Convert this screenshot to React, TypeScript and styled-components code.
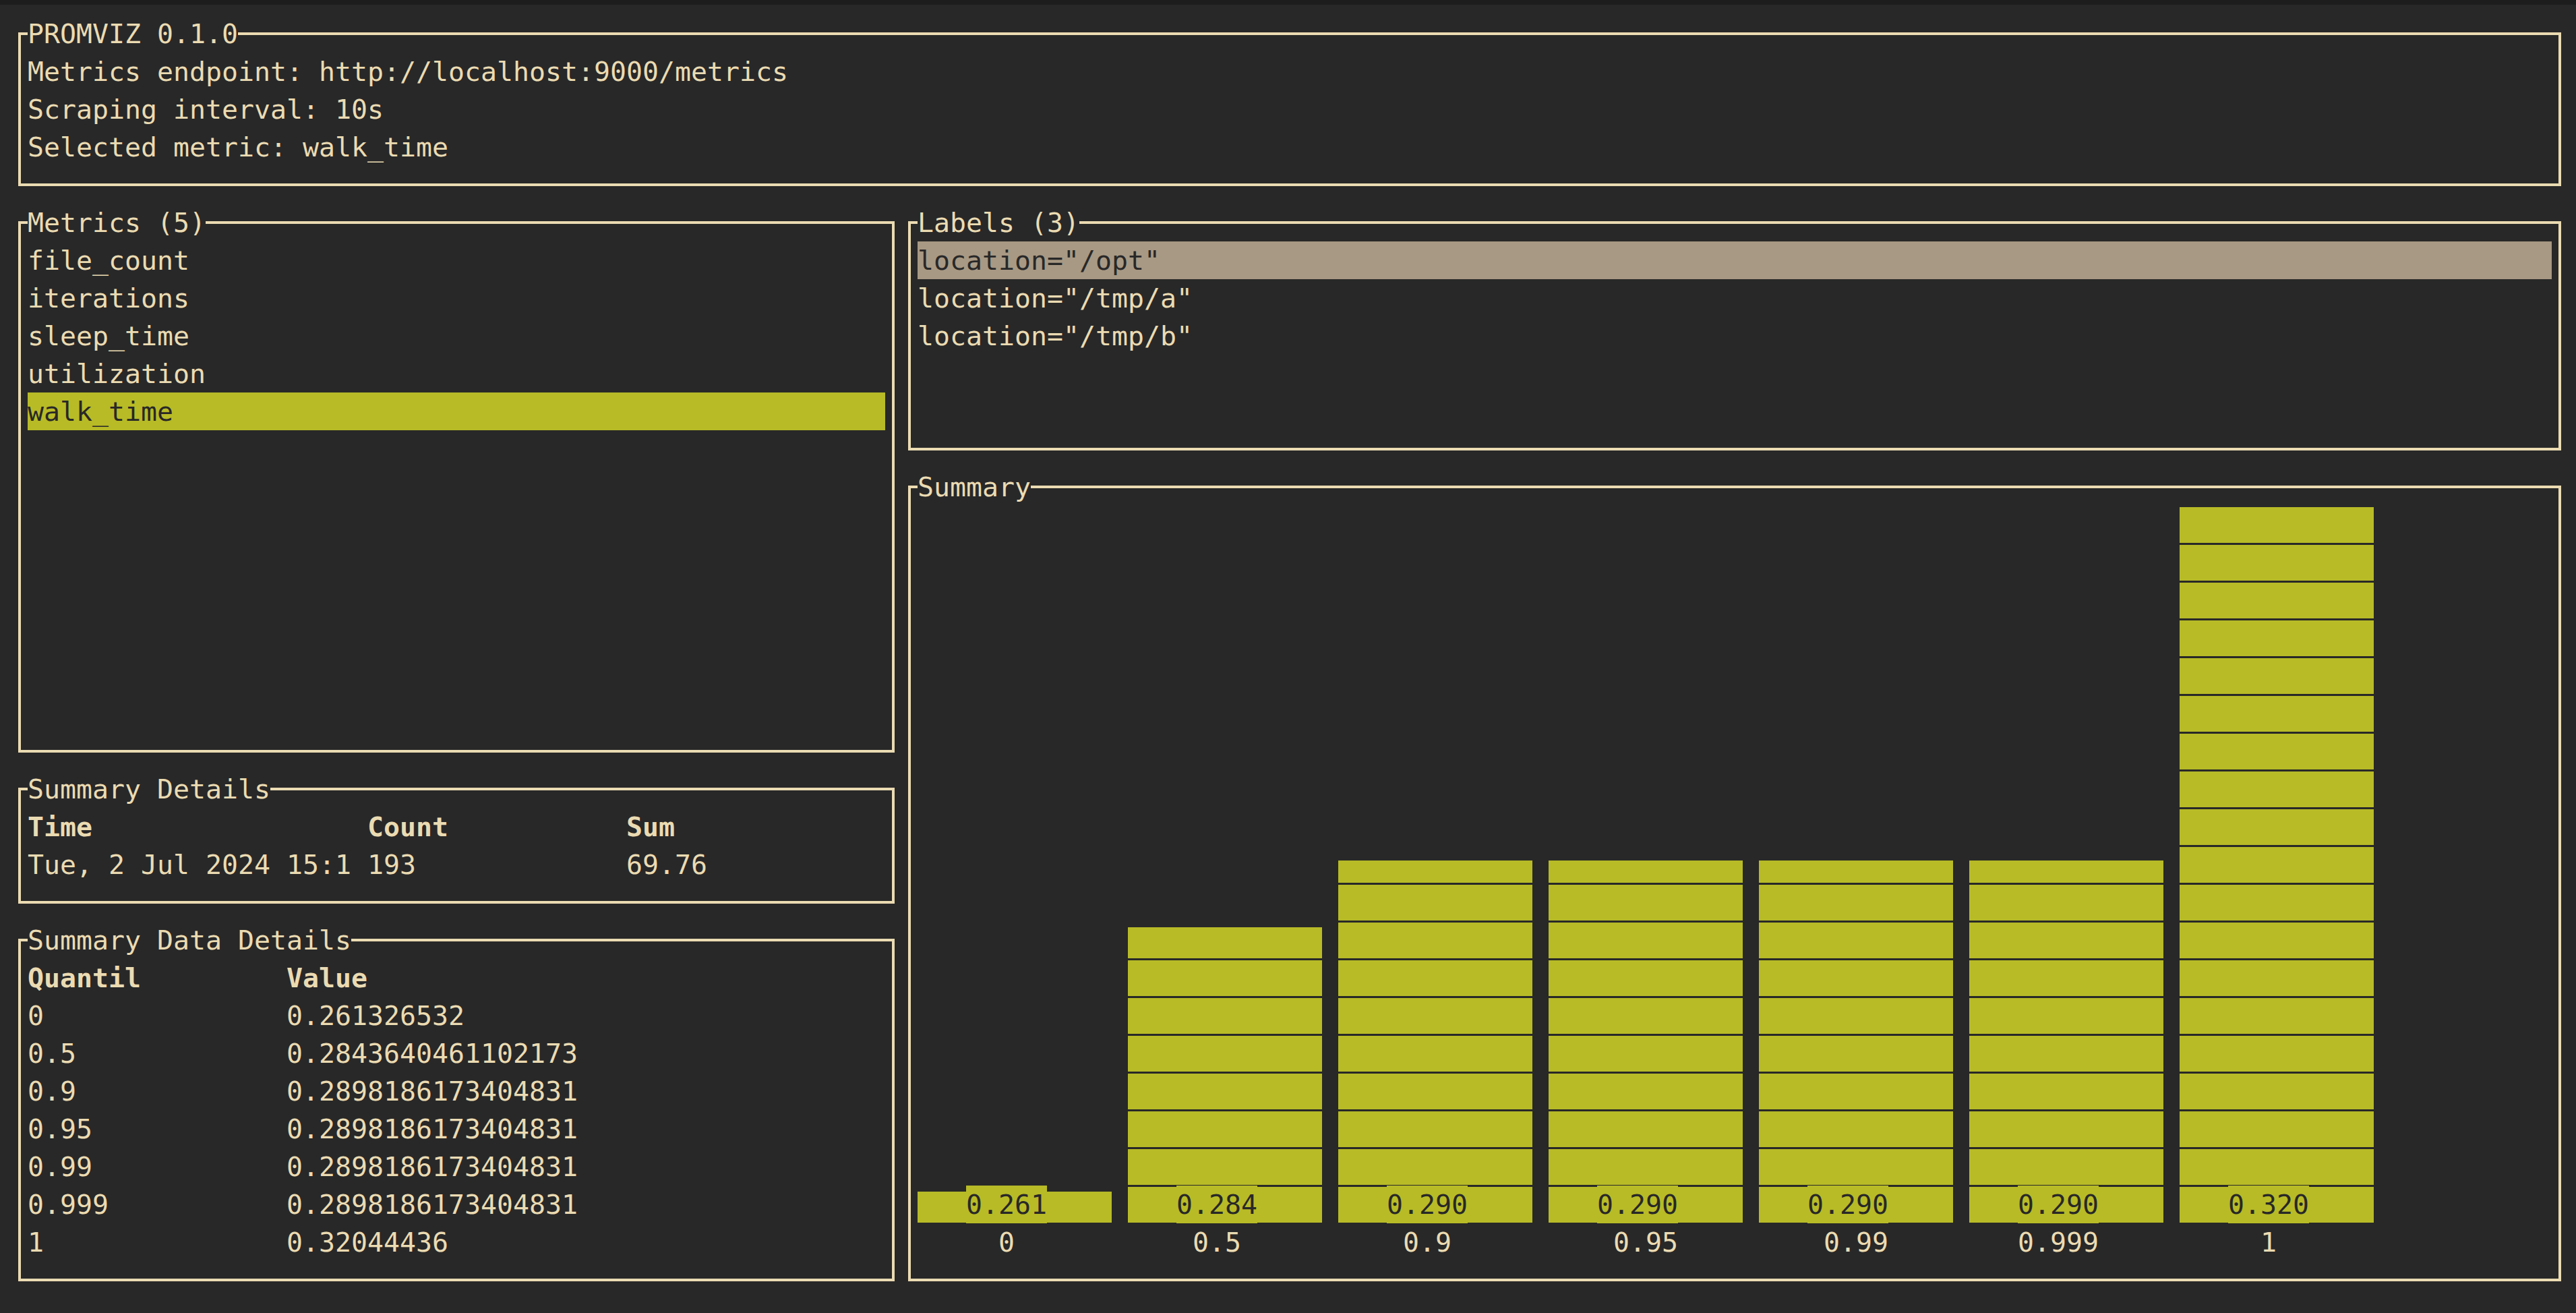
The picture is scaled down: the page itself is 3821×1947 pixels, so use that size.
import styled, { createGlobalStyle } from 'styled-components';

// terminal cell metrics (px)
const CW = 24;
const CH = 56;

const colors = {
  bg: '#282828',
  chrome: '#1d1d1d',
  fg: '#ebdbb2',
  dark: '#282828',
  green: '#b8bb26',
  gray: '#a89984',
};

const metrics = ['file_count', 'iterations', 'sleep_time', 'utilization', 'walk_time'];
const labels = ['location="/opt"', 'location="/tmp/a"', 'location="/tmp/b"'];

const quantiles = [
  ['0', '0.261326532'],
  ['0.5', '0.2843640461102173'],
  ['0.9', '0.2898186173404831'],
  ['0.95', '0.2898186173404831'],
  ['0.99', '0.2898186173404831'],
  ['0.999', '0.2898186173404831'],
  ['1', '0.32044436'],
];

// bar heights in eighths of a cell
const bars = [
  { label: '0', value: '0.261', eighths: 7 },
  { label: '0.5', value: '0.284', eighths: 63 },
  { label: '0.9', value: '0.290', eighths: 77 },
  { label: '0.95', value: '0.290', eighths: 77 },
  { label: '0.99', value: '0.290', eighths: 77 },
  { label: '0.999', value: '0.290', eighths: 77 },
  { label: '1', value: '0.320', eighths: 152 },
];

const BAR_COLS = 12;
const BAR_ROWS = 19;

const centerOffset = (text: string) => Math.floor((BAR_COLS - text.length) / 2) * CW;

const GlobalStyle = createGlobalStyle`
  html, body {
    margin: 0;
    padding: 0;
    background: ${colors.bg};
  }
  body {
    font-family: "DejaVu Sans Mono", "Liberation Mono", monospace;
    font-size: 39.86px;
    line-height: ${CH}px;
    color: ${colors.fg};
  }
`;

function Panel({ title, rows, children }: { title: string; rows: number; children?: React.ReactNode }) {
  return (
    <PanelBox $rows={rows}>
      <PanelTitle>{title}</PanelTitle>
      {children}
    </PanelBox>
  );
}

function Bar({ value, eighths }: { value: string; eighths: number }) {
  const full = Math.floor(eighths / 8);
  const rem = eighths % 8;
  const cells: number[] = [];
  if (rem) cells.push(rem);
  for (let i = 0; i < full; i++) cells.push(8);

  return (
    <BarColumn>
      {cells.map((fill, i) => (
        <BarCell key={i}>
          <BarFill $eighths={fill} />
          {i === cells.length - 1 && <ValueLabel $offset={centerOffset(value)}>{value}</ValueLabel>}
        </BarCell>
      ))}
    </BarColumn>
  );
}

export default function App() {
  return (
    <>
      <GlobalStyle />
      <Screen>
        <ChromeStrip />
        <Terminal>
          <Panel title="PROMVIZ 0.1.0" rows={5}>
            <Line>Metrics endpoint: http://localhost:9000/metrics</Line>
            <Line>Scraping interval: 10s</Line>
            <Line>Selected metric: walk_time</Line>
          </Panel>

          <Body>
            <Column $cols={55}>
              <Panel title="Metrics (5)" rows={15}>
                {metrics.map((m) => (
                  <ListItem key={m} $highlight={m === 'walk_time' ? colors.green : undefined}>
                    {m}
                  </ListItem>
                ))}
              </Panel>

              <Panel title="Summary Details" rows={4}>
                <TableRow $columns={`${21 * CW}px ${16 * CW}px 1fr`}>
                  <HeadCell>Time</HeadCell>
                  <HeadCell>Count</HeadCell>
                  <HeadCell>Sum</HeadCell>
                </TableRow>
                <TableRow $columns={`${21 * CW}px ${16 * CW}px 1fr`}>
                  <Cell>Tue, 2 Jul 2024 15:1</Cell>
                  <Cell>193</Cell>
                  <Cell>69.76</Cell>
                </TableRow>
              </Panel>

              <Panel title="Summary Data Details" rows={10}>
                <TableRow $columns={`${16 * CW}px 1fr`}>
                  <HeadCell>Quantil</HeadCell>
                  <HeadCell>Value</HeadCell>
                </TableRow>
                {quantiles.map(([q, v]) => (
                  <TableRow key={q} $columns={`${16 * CW}px 1fr`}>
                    <Cell>{q}</Cell>
                    <Cell>{v}</Cell>
                  </TableRow>
                ))}
              </Panel>
            </Column>

            <Column $cols={103}>
              <Panel title="Labels (3)" rows={7}>
                {labels.map((l, i) => (
                  <ListItem key={l} $highlight={i === 0 ? colors.gray : undefined}>
                    {l}
                  </ListItem>
                ))}
              </Panel>

              <Panel title="Summary" rows={22}>
                <BarsRow>
                  {bars.map((b) => (
                    <Bar key={b.label} value={b.value} eighths={b.eighths} />
                  ))}
                </BarsRow>
                <AxisRow>
                  {bars.map((b) => (
                    <AxisLabel key={b.label} $offset={centerOffset(b.label)}>
                      {b.label}
                    </AxisLabel>
                  ))}
                </AxisRow>
              </Panel>
            </Column>
          </Body>
        </Terminal>
      </Screen>
    </>
  );
}

const Screen = styled.div`
  min-height: 1947px;
  background: ${colors.bg};
`;

const ChromeStrip = styled.div`
  height: 7px;
  background: ${colors.chrome};
`;

const Terminal = styled.main`
  width: ${158 * CW}px;
  padding: 15px 0 0 17px;
`;

const Body = styled.div`
  display: flex;
`;

const Column = styled.div<{ $cols: number }>`
  width: ${(p) => p.$cols * CW}px;
  display: flex;
  flex-direction: column;
`;

const PanelBox = styled.section<{ $rows: number }>`
  position: relative;
  box-sizing: border-box;
  height: ${(p) => p.$rows * CH}px;
  padding: ${CH}px ${CW}px;
  overflow: hidden;

  &::before {
    content: '';
    position: absolute;
    top: ${CH / 2 - 2}px;
    bottom: ${CH / 2 - 2}px;
    left: ${CW / 2 - 2}px;
    right: ${CW / 2 - 2}px;
    border: 4px solid ${colors.fg};
    pointer-events: none;
  }
`;

const PanelTitle = styled.h2`
  position: absolute;
  z-index: 1;
  top: 0;
  left: ${CW}px;
  margin: 0;
  height: ${CH}px;
  font: inherit;
  line-height: ${CH}px;
  white-space: pre;
  background: ${colors.bg};
`;

const Line = styled.div`
  height: ${CH}px;
  white-space: pre;
`;

const ListItem = styled.div<{ $highlight?: string }>`
  height: ${CH}px;
  white-space: pre;
  background: ${(p) => p.$highlight ?? 'transparent'};
  color: ${(p) => (p.$highlight ? colors.dark : colors.fg)};
`;

const TableRow = styled.div<{ $columns: string }>`
  display: grid;
  grid-template-columns: ${(p) => p.$columns};
  height: ${CH}px;
`;

const Cell = styled.span`
  white-space: pre;
  overflow: hidden;
`;

const HeadCell = styled(Cell)`
  font-weight: bold;
`;

const BarsRow = styled.div`
  display: flex;
  align-items: flex-end;
  gap: ${CW}px;
  height: ${BAR_ROWS * CH}px;
`;

const BarColumn = styled.div`
  width: ${BAR_COLS * CW}px;
  display: flex;
  flex-direction: column;
`;

const BarCell = styled.div`
  position: relative;
  box-sizing: border-box;
  height: ${CH}px;
  padding-bottom: 1px;
  display: flex;
  flex-direction: column;
  justify-content: flex-end;
`;

const BarFill = styled.div<{ $eighths: number }>`
  height: ${(p) => Math.round((p.$eighths / 8) * 53)}px;
  background: ${colors.green};
`;

const ValueLabel = styled.span<{ $offset: number }>`
  position: absolute;
  top: 0;
  left: ${(p) => p.$offset}px;
  height: ${CH}px;
  white-space: pre;
  background: ${colors.green};
  color: ${colors.dark};
`;

const AxisRow = styled.div`
  display: flex;
  gap: ${CW}px;
  height: ${CH}px;
`;

const AxisLabel = styled.span<{ $offset: number }>`
  width: ${BAR_COLS * CW}px;
  box-sizing: border-box;
  padding-left: ${(p) => p.$offset}px;
  white-space: pre;
`;
